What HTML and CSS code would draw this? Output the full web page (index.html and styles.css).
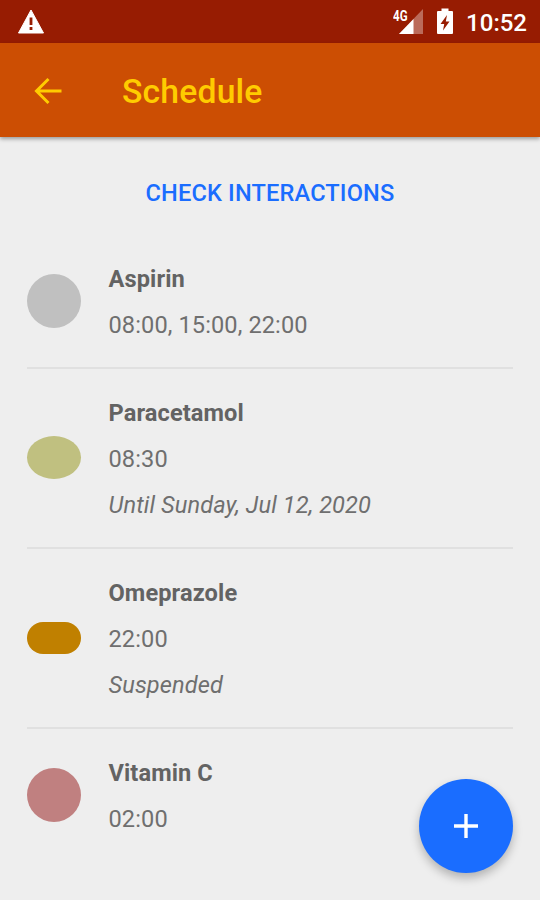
FILE: index.html
```
<!DOCTYPE html>
<html lang="en">
<head>
    <meta charset="utf-8">
    <title>Schedule</title>
    <link rel="stylesheet" href="styles.css">
</head>
<body>
    <div class="status-bar">
        <svg class="warning" width="28" height="26" viewBox="0 0 28 26">
            <path d="M14 2 L26.5 25 H1.5 Z" fill="#fff" stroke="#fff" stroke-linejoin="round"/>
            <path d="M14 9.5 V17 M14 19 V22" stroke="#971c02" stroke-width="2.8"/>
        </svg>
        <div class="status-icons">
            <svg width="31" height="28" viewBox="0 0 31 28">
                <path d="M6 26 L30 1 V26 Z" fill="#fff" opacity="0.35"/>
                <path d="M6 26 L20.5 11 V26 Z" fill="#fff"/>
                <text class="network" x="0" y="12.5" textLength="14.5" lengthAdjust="spacingAndGlyphs">4G</text>
            </svg>
            <svg class="battery" width="18" height="28" viewBox="0 0 18 28">
                <path d="M5.5 0.5 H12.5 V3 H16 Q17 3 17 4 V25 Q17 26 16 26 H2 Q1 26 1 25 V4 Q1 3 2 3 H5.5 Z" fill="#fff"/>
                <path d="M11 7 L4.5 16 H8.2 L7 22.5 L13.5 13.5 H9.8 Z" fill="#971c02"/>
            </svg>
            <span class="clock">10:52</span>
        </div>
    </div>

    <header class="app-bar">
        <svg width="28" height="28" viewBox="0 0 28 28">
            <path d="M27.5 14 H3 M14.5 2 L2.5 14 L14.5 26" fill="none" stroke="#ffcc00" stroke-width="3"/>
        </svg>
        <h1>Schedule</h1>
    </header>

    <div class="container">
        <button class="check">CHECK INTERACTIONS</button>
        <ul class="schedule">
            <li class="medicine">
                <span class="pill aspirin"></span>
                <div class="details">
                    <div class="name">Aspirin</div>
                    <div>08:00, 15:00, 22:00</div>
                </div>
            </li>
            <li class="medicine">
                <span class="pill paracetamol"></span>
                <div class="details">
                    <div class="name">Paracetamol</div>
                    <div>08:30</div>
                    <div class="note">Until Sunday, Jul 12, 2020</div>
                </div>
            </li>
            <li class="medicine">
                <span class="pill omeprazole"></span>
                <div class="details">
                    <div class="name">Omeprazole</div>
                    <div>22:00</div>
                    <div class="note">Suspended</div>
                </div>
            </li>
            <li class="medicine">
                <span class="pill vitamin"></span>
                <div class="details">
                    <div class="name">Vitamin C</div>
                    <div>02:00</div>
                </div>
            </li>
        </ul>
    </div>

    <button class="add">
        <svg width="24" height="24" viewBox="0 0 24 24">
            <path d="M12 0 V24 M0 12 H24" stroke="#fff" stroke-width="3.4"/>
        </svg>
    </button>
</body>
</html>
```

FILE: styles.css
```
body {
    margin: 0;
    height: 900px;
    overflow: hidden;
    background-color: #eeeeee;
    color: #6f6f6f;
    font-family: Roboto, sans-serif;
}

button {
    padding: 0;
    border: none;
    background: none;
    font-family: inherit;
    cursor: pointer;
}

.status-bar {
    display: flex;
    justify-content: space-between;
    box-sizing: border-box;
    height: 43px;
    padding: 8px 13px 0 17px;
    background-color: #971c02;
    color: white;
}

.status-icons {
    display: flex;
    align-items: flex-start;
}

.network {
    font-size: 14px;
    font-weight: bold;
    fill: white;
}

.battery {
    margin: 0 12px 0 12px;
}

.clock {
    font-size: 24px;
    font-weight: 500;
    line-height: 30px;
}

.app-bar {
    display: flex;
    align-items: center;
    gap: 60px;
    box-sizing: border-box;
    height: 94px;
    padding: 1px 0 0 34px;
    background-color: #cc4e03;
    box-shadow: 0 2px 4px rgba(0, 0, 0, 0.35);
}

h1 {
    margin: 0;
    padding-top: 1px;
    color: #ffcc00;
    font-size: 33.75px;
    font-weight: 500;
    letter-spacing: 0.15px;
}

.container {
    padding: 28px 27px 0;
}

.check {
    display: block;
    width: 100%;
    height: 56px;
    margin-bottom: 14px;
    color: #1a6dff;
    font-size: 23.6px;
    font-weight: 500;
    letter-spacing: 0.15px;
}

.schedule {
    list-style: none;
    margin: 0;
    padding: 0;
}

.medicine {
    display: flex;
    align-items: center;
    gap: 27px;
    padding: 21px 0 19px;
    border-bottom: 2px solid #e0e0e0;
}

.medicine:last-child {
    border-bottom: none;
}

.details {
    padding-left: 0.5px;
    font-size: 23.6px;
    line-height: 46px;
    letter-spacing: 0.1px;
}

.name {
    font-weight: bold;
    color: #636363;
}

.note {
    font-style: italic;
}

.pill {
    width: 54px;
    height: 54px;
    margin-bottom: 3px;
    border-radius: 50%;
}

.aspirin {
    background-color: #c0c0c0;
}

.paracetamol {
    height: 43px;
    background-color: #c0c080;
}

.omeprazole {
    height: 32px;
    border-radius: 16px;
    background-color: #c08000;
}

.vitamin {
    background-color: #c08080;
}

/* floats over the list */
.add {
    position: absolute;
    right: 27px;
    bottom: 27px;
    display: flex;
    align-items: center;
    justify-content: center;
    width: 94px;
    height: 94px;
    border-radius: 50%;
    background-color: #1a6dff;
    box-shadow: 0 5px 10px rgba(0, 0, 0, 0.25);
}
```
